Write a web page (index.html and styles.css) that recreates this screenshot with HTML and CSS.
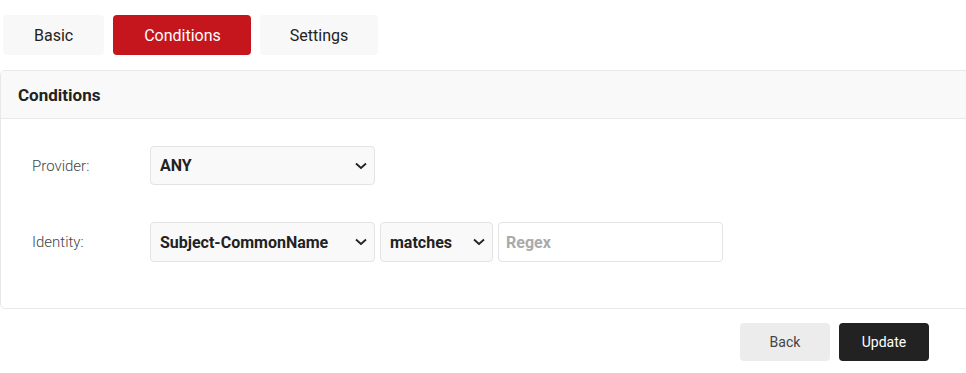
FILE: index.html
```html
<!DOCTYPE html>
<html>
<head>
<meta charset="utf-8">
<link rel="stylesheet" href="styles.css">
</head>
<body>
<div class="tabs">
  <div class="tab t-basic">Basic</div>
  <div class="tab active">Conditions</div>
  <div class="tab">Settings</div>
</div>
<div class="panel">
  <div class="panel-head">Conditions</div>
  <div class="panel-body">
    <div class="row">
      <div class="label">Provider:</div>
      <div class="select w225"><span>ANY</span><svg class="chev" width="12" height="8" viewBox="0 0 12 8"><path d="M1 1.5 L6 6 L11 1.5" fill="none" stroke="#222" stroke-width="1.8"/></svg></div>
    </div>
    <div class="row">
      <div class="label">Identity:</div>
      <div class="select w225"><span>Subject-CommonName</span><svg class="chev" width="12" height="8" viewBox="0 0 12 8"><path d="M1 1.5 L6 6 L11 1.5" fill="none" stroke="#222" stroke-width="1.8"/></svg></div>
      <div class="select w113"><span>matches</span><svg class="chev" width="12" height="8" viewBox="0 0 12 8"><path d="M1 1.5 L6 6 L11 1.5" fill="none" stroke="#222" stroke-width="1.8"/></svg></div>
      <div class="input w225">Regex</div>
    </div>
  </div>
</div>
<div class="actions">
  <div class="btn back">Back</div>
  <div class="btn update">Update</div>
</div>
</body>
</html>
```
FILE: styles.css
```css
html, body {
  margin: 0;
  padding: 0;
  background: #fff;
  overflow: hidden;
  font-family: Roboto, "Liberation Sans", sans-serif;
  color: #222;
}
.tabs {
  display: flex;
  gap: 9px;
  padding: 15px 0 0 3px;
  height: 40px;
}
.tab {
  height: 40px;
  padding: 0 30px;
  display: flex;
  align-items: center;
  font-size: 16px;
  background: #f8f8f8;
  border-radius: 4px;
  color: #222;
}
.tab.t-basic { padding: 0 31px; }
.tab.active {
  background: #c5161d;
  color: #fff;
  padding: 0 30px 0 31px;
}
.panel {
  margin-top: 15px;
  width: 1000px;
  border: 1px solid #e8e8e8;
  border-radius: 5px;
  height: 239px;
  box-sizing: border-box;
}
.panel-head {
  height: 47px;
  background: #f9f9f9;
  border-bottom: 1px solid #e8e8e8;
  border-radius: 5px 5px 0 0;
  display: flex;
  align-items: center;
  padding-left: 17px;
  font-size: 17px;
  font-weight: 700;
  color: #222;
}
.panel-body {
  padding: 27px 0 0 31px;
  display: flex;
  flex-direction: column;
  gap: 37px;
}
.row {
  display: flex;
  align-items: center;
  gap: 5px;
}
.label {
  width: 113px;
  font-size: 15px;
  font-weight: 300;
  color: #444;
}
.select, .input {
  box-sizing: border-box;
  height: 39px;
  border: 1px solid #e3e3e3;
  border-radius: 4px;
  display: flex;
  align-items: center;
  padding: 0 10px 0 9px;
  font-size: 16px;
}
.row + .row .select, .row + .row .input { height: 40px; }
.select {
  background: #f9f9f9;
  font-weight: 700;
  color: #222;
  justify-content: space-between;
}
.chev { margin-right: -3px; }
.input {
  background: #fff;
  color: #aaa;
  font-weight: 700;
  padding-left: 7px;
}
.w225 { width: 225px; }
.w113 { width: 113px; }
.actions {
  display: flex;
  justify-content: flex-end;
  gap: 9px;
  padding: 14px 37px 0 0;
}
.btn {
  width: 90px;
  height: 38px;
  border-radius: 4px;
  display: flex;
  align-items: center;
  justify-content: center;
  font-size: 14px;
}
.back { background: #ececec; color: #444; }
.update { background: #222; color: #fff; }
```
